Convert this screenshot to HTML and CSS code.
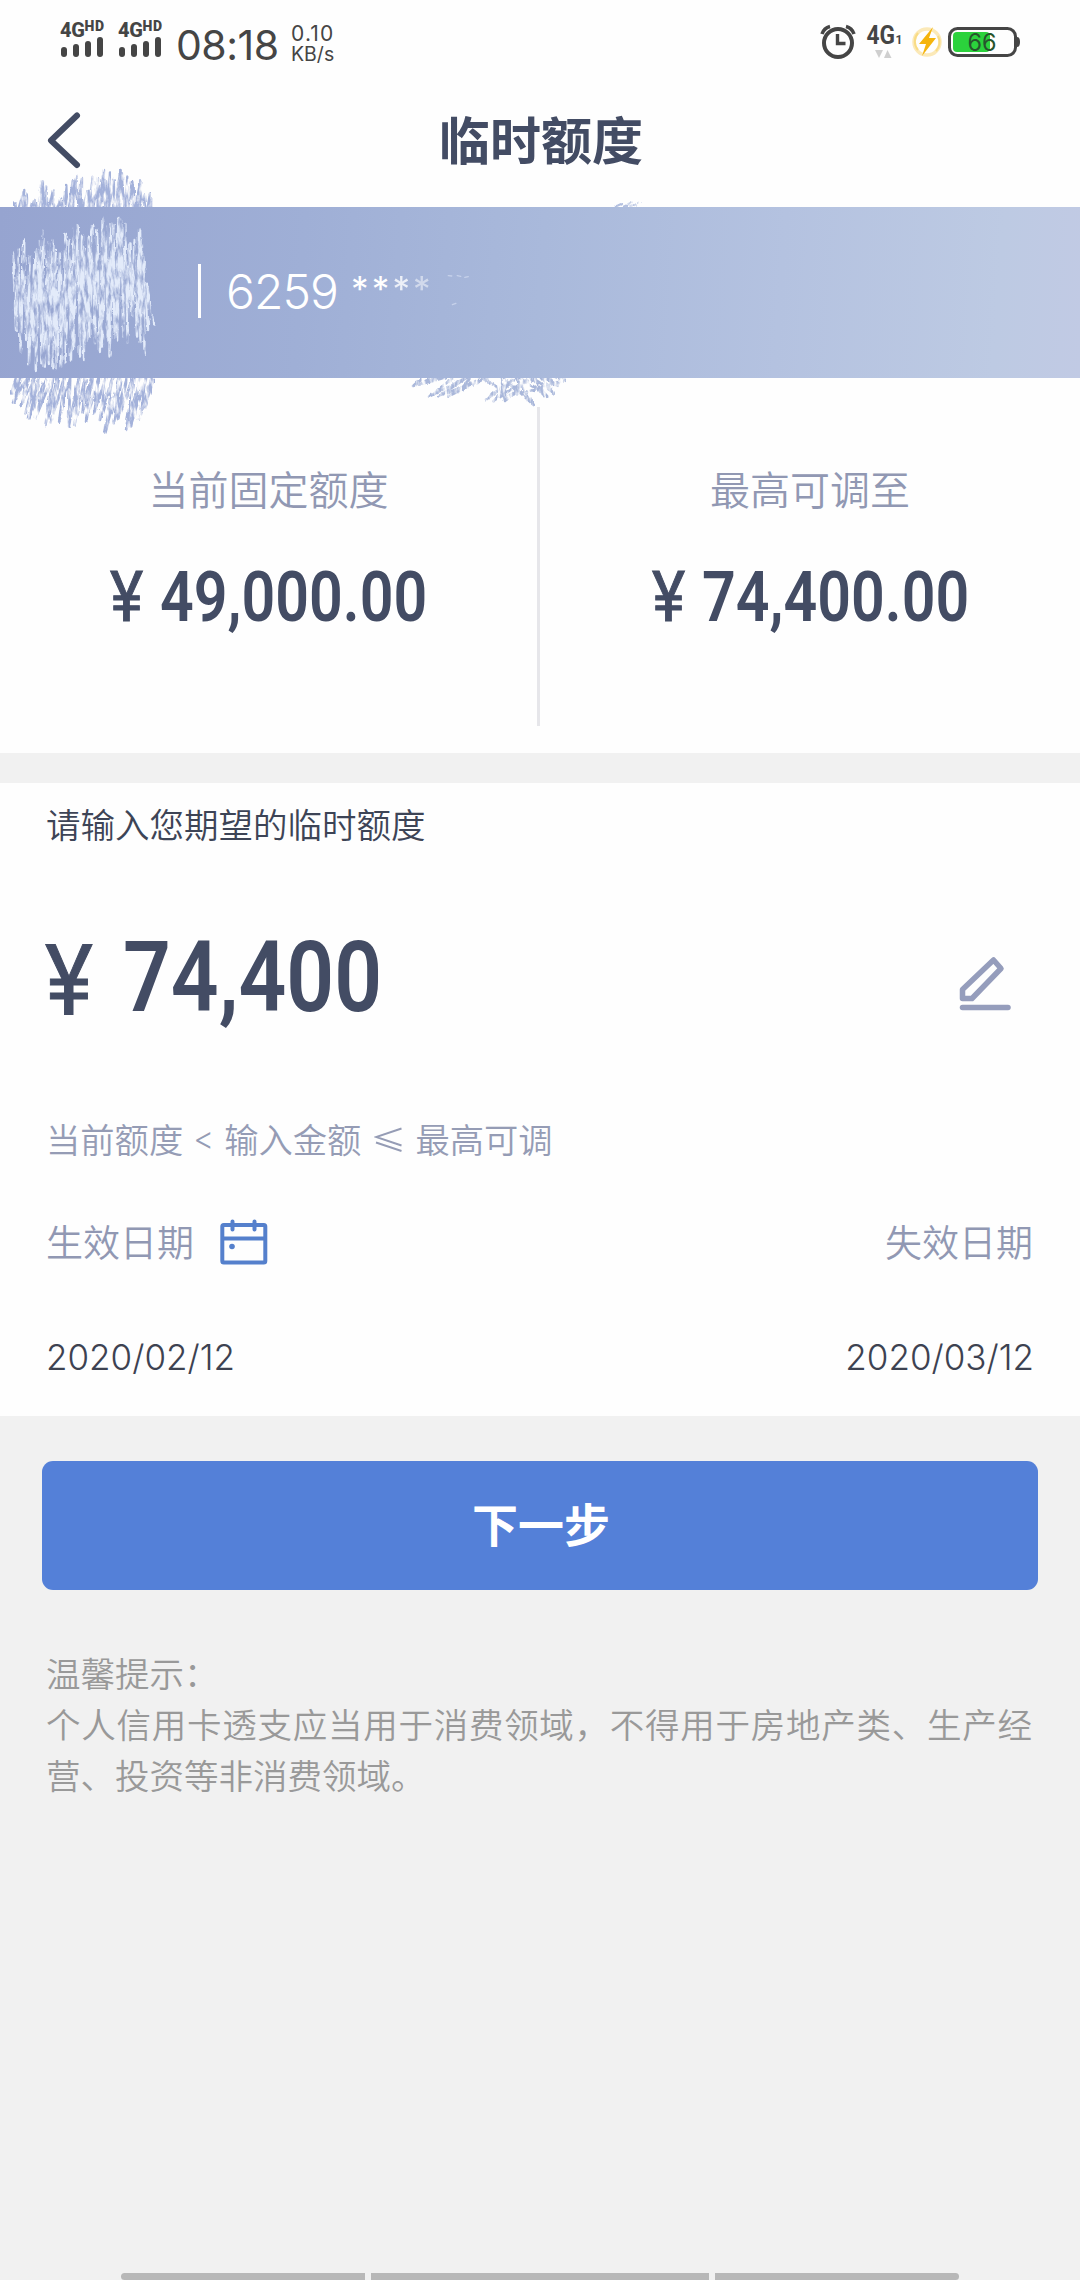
FILE: index.html
```html
<!DOCTYPE html>
<html lang="zh-CN">
<head>
<meta charset="utf-8">
<title>临时额度</title>
<link rel="stylesheet" href="styles.css">
</head>
<body>
<div class="screen">
  <header class="status">
    <div class="status-left">
      <div class="signal">
        <div class="net">4G<span class="hd">HD</span></div>
        <div class="bars"><i class="b1"></i><i class="b2"></i><i class="b3"></i><i class="b4"></i></div>
      </div>
      <div class="signal">
        <div class="net">4G<span class="hd">HD</span></div>
        <div class="bars"><i class="b1"></i><i class="b2"></i><i class="b3"></i><i class="b4"></i></div>
      </div>
      <div class="clock">08:18</div>
      <div class="speed"><span class="rate">0.10</span><span>KB/s</span></div>
    </div>
    <svg class="status-right" width="204" height="40" viewBox="818 22 204 40">
      <g fill="none" stroke="#454545">
        <circle cx="838" cy="43" r="14" stroke-width="4"/>
        <path d="M837.5 34v9.500h8" stroke-width="3.400"/>
        <path d="M822 34q2-6 8-7.500M854 34q-2-6-8-7.500" stroke-width="3.600"/>
      </g>
      <text class="net4g" x="866.500" y="44" textLength="28.500" lengthAdjust="spacingAndGlyphs">4G</text>
      <text class="sub1" x="895.500" y="44">1</text>
      <path d="M875 50h8l-4 8zM884 58h7.500l-4-8z" fill="#cfcfcf"/>
      <circle cx="927" cy="42" r="13" fill="none" stroke="#fbe9b8" stroke-width="3.500"/>
      <path d="M918 33a13 13 0 0 0 0 17M936 51a13 13 0 0 0 2-15" fill="none" stroke="#f9dc85" stroke-width="2"/>
      <path d="M933 27l-14 17h7l-4 12 14-18h-7z" fill="#f5b40c"/>
      <rect x="953" y="32" width="37" height="20" rx="4" fill="#2bd23c"/>
      <rect x="949.500" y="28.500" width="66" height="27" rx="8" fill="none" stroke="#454545" stroke-width="3"/>
      <path d="M1017 37q3 0 3 5t-3 5z" fill="#454545"/>
      <text class="charge" x="967.500" y="51" textLength="29" lengthAdjust="spacingAndGlyphs">66</text>
    </svg>
  </header>

  <nav class="nav">
    <svg class="back" width="40" height="60" viewBox="0 0 40 60"><path d="M33 5.500L7 30.500 33 55" fill="none" stroke="#434c64" stroke-width="6" stroke-linecap="round" stroke-linejoin="round"/></svg>
    <h1 class="title">临时额度</h1>
  </nav>

  <section class="card">
    <div class="card-line"></div>
    <div class="card-no">6259</div>
    <div class="stars"><span>*</span><span>*</span><span class="s3">*</span><span class="s4">*</span></div>
  </section>

  <section class="limits">
    <div class="limit">
      <div class="label">当前固定额度</div>
      <div class="amount"><span class="yen">¥</span><span class="num">49,000.00</span></div>
    </div>
    <div class="divider"></div>
    <div class="limit">
      <div class="label">最高可调至</div>
      <div class="amount"><span class="yen">¥</span><span class="num">74,400.00</span></div>
    </div>
  </section>

  <section class="form">
    <div class="prompt">请输入您期望的临时额度</div>
    <div class="entry">
      <div class="big"><span class="yen">¥</span><span class="num">74,400</span></div>
      <svg class="edit" width="52" height="55" viewBox="959 956 52 55" fill="none" stroke="#959dbc">
        <path d="M962.500 989.500v9h9.500L1001 968.500l-7.500-8.500z" stroke-width="5.500" stroke-linejoin="round"/>
        <path d="M962.500 1007.500h45.500" stroke-width="5.500" stroke-linecap="round"/>
      </svg>
    </div>
    <div class="rule"><span>当前额度</span><span class="lt">&lt;</span><span>输入金额</span><svg class="le" width="29" height="26" viewBox="0 0 29 26" fill="none" stroke="#959cb5" stroke-width="1.900"><path d="M27.500 1.500L2 10l25.500 8.500M2 15.500L27.500 24"/></svg><span>最高可调</span></div>
    <div class="row labels">
      <div class="start"><span>生效日期</span>
        <svg width="48" height="46" viewBox="0 0 48 46" fill="none" stroke="#5580cc" stroke-width="4"><rect x="2.300" y="6" width="43" height="37.500" rx="1.500"/><path d="M2 19.500h44"/><path d="M12.500 2.500v8M34.500 2.500v8" stroke-linecap="round"/><circle cx="12" cy="27.500" r="2.800" fill="#5580cc" stroke="none"/></svg>
      </div>
      <span>失效日期</span>
    </div>
    <div class="row dates"><span>2020/02/12</span><span>2020/03/12</span></div>
  </section>

  <button class="next">下一步</button>

  <section class="tips">
    <p>温馨提示：</p>
    <p>个人信用卡透支应当用于消费领域，不得用于房地产类、生产经营、投资等非消费领域。</p>
  </section>

  <footer class="gesture"><i></i><i class="mid"></i><i></i></footer>

  <svg class="scribble" width="700" height="300" viewBox="0 0 2033 900" preserveAspectRatio="none">
    <defs>
      <filter id="chalk" x="-5%" y="-5%" width="110%" height="110%">
        <feTurbulence type="fractalNoise" baseFrequency="0.09 0.022" numOctaves="4" seed="7" result="n"/>
        <feDisplacementMap in="SourceGraphic" in2="n" scale="12" xChannelSelector="R" yChannelSelector="G" result="d"/>
        <feColorMatrix in="n" type="matrix" values="0 0 0 0 0  0 0 0 0 0  0 0 0 0 0  0 0 3 0 -0.75" result="m"/>
        <feComposite in="d" in2="m" operator="in"/>
      </filter>
      <clipPath id="above"><rect x="0" y="0" width="2033" height="171"/></clipPath>
      <clipPath id="below"><rect x="0" y="684" width="2033" height="216"/></clipPath>
    </defs>
    <g fill="none" stroke-linejoin="round" stroke-linecap="round">
      <path filter="url(#chalk)" stroke="#e3ebfa" stroke-width="7" d="M38 310L46 540 54 295 60 605 70 268 76 570 86 320 84 640 100 330 96 590 106 300 104 660 116 270 120 640 126 242 130 650 140 280 142 645 152 270 152 655 162 300 164 655 174 310 178 650 190 252 190 640 202 270 206 632 214 235 212 600 226 224 232 620 238 260 244 630 246 290 254 570 258 260 262 560 268 228 276 580 282 240 290 606 298 206 296 590 308 230 312 570 320 222 318 620 330 225 332 565 344 206 340 575 352 208 358 560 364 222 370 575 376 280 384 500 390 270 398 560 404 238 408 580 412 270 420 615 416 320 430 540 426 400 446 524"/>
      <g clip-path="url(#above)"><g filter="url(#chalk)" stroke="#a3b1da">
        <path stroke-width="8" d="M44 158L48 200 70 120 64 200 80 130 84 200 100 150 108 200 124 94 124 200 134 110 138 200 154 122 158 200 176 145 180 200 192 105 196 200 212 90 208 200 222 78 226 200 238 84 236 200 254 125 256 200 270 80 266 200 284 85 284 200 302 60 290 200 306 90 306 200 320 68 312 200 330 90 332 200 350 60 342 200 354 70 360 200 370 80 368 200 384 95 388 200 408 95 402 200 416 120 424 200 436 130 438 200"/>
        <path stroke="#b3c0e0" stroke-width="6" d="M1788 168L1808 159M1812 168L1835 157M1830 168L1862 159"/>
      </g></g>
      <g clip-path="url(#below)"><g filter="url(#chalk)" stroke="#a3b1da">
        <path stroke-width="8" d="M50 670L34 730 66 670 38 758 84 670 60 765 104 670 74 790 118 670 84 805 138 670 104 802 156 670 132 825 170 670 148 818 190 670 172 815 204 670 200 830 232 670 216 825 250 670 240 790 268 670 250 815 290 670 274 790 310 670 290 810 330 670 306 848 352 670 330 820 372 670 344 805 390 670 366 840 410 670 378 832 426 670 404 808 444 670 418 775 446 690"/>
        <path stroke="#a9b7da" stroke-width="8" d="M1240 670L1200 708 1290 670 1224 702 1330 672 1246 740 1360 680 1270 742 1390 690 1300 740 1420 680 1340 712 1380 670 1450 715 1410 750 1490 690 1430 754 1530 690 1470 750 1450 670 1550 765 1490 670 1590 740 1530 670 1610 730 1560 670 1616 705 1580 670 1640 690 1550 720 1480 735"/>
      </g></g>
      <path stroke="#c6d1ea" stroke-width="4" d="M1302 377L1312 378M1328 377L1338 379M1350 382L1360 380M1314 464L1324 460"/>
    </g>
  </svg>
</div>
</body>
</html>
```
FILE: styles.css
```css
* { box-sizing: border-box; margin: 0; padding: 0; }
body { background: #f1f1f1; }

.screen {
  position: relative;
  display: flex;
  flex-direction: column;
  width: 1080px;
  height: 2280px;
  overflow: hidden;
  background: #f1f1f1;
  color: #434c64;
  font-family: Inter, "Noto Sans CJK SC", sans-serif;
}

/* status bar */
.status {
  display: flex;
  justify-content: space-between;
  height: 84px;
  padding: 20px 58px 0 60px;
  background: #fefefe;
  color: #454545;
}
.status-left { display: flex; }
.signal { width: 45px; margin-right: 13px; }
.net {
  display: flex;
  height: 17px;
  font: 800 20px/20px Roboto, sans-serif;
  letter-spacing: -0.3px;
}
.hd { font-size: 14px; line-height: 13px; font-weight: 900; letter-spacing: 0.6px; }
.bars { display: flex; align-items: flex-end; gap: 6px; height: 20px; padding-left: 1px; }
.bars i { width: 6px; border-radius: 3px; background: #454545; }
.b1 { height: 10px; }
.b2 { height: 13px; }
.b3 { height: 16px; }
.b4 { height: 20px; }
.clock { width: 115px; font-size: 41px; line-height: 50px; letter-spacing: -0.5px; white-space: nowrap; }
.speed { display: flex; flex-direction: column; padding-top: 4px; font-size: 19.500px; line-height: 20px; }
.rate { font-size: 21px; letter-spacing: 1.2px; }
.status-right { margin-top: 2px; }
.net4g { font: 700 25px Roboto, sans-serif; fill: #454545; }
.sub1 { font: 700 12px Roboto, sans-serif; fill: #454545; }
.charge { font: 400 24px Inter, sans-serif; fill: #27552d; }

/* title bar */
.nav {
  display: grid;
  grid-template-columns: 100px 1fr 100px;
  align-items: center;
  height: 123px;
  padding-bottom: 11px;
  background: #fefefe;
}
.back { margin-left: 44px; }
.title { padding: 4px 0 0 2px; font-size: 51px; font-weight: 700; line-height: 60px; text-align: center; }

/* card band */
.card {
  display: flex;
  height: 171px;
  padding: 57px 0 0 198px;
  background: linear-gradient(94deg, #96a4d0 0%, #9fafd6 28%, #a9b9db 50%, #b4c2e0 72%, #bdcae3 92%, #c1cae4 100%);
  color: #fff;
}
.card-line { width: 3px; height: 54px; background: #fff; }
.card-no { width: 125px; margin-left: 25px; font-size: 48px; font-weight: 300; line-height: 56px; letter-spacing: -0.9px; }
.stars { display: flex; padding-top: 3px; font-size: 35px; font-weight: 400; line-height: 44px; }
.stars span { width: 20.700px; }
.stars .s3 { opacity: 0.8; }
.stars .s4 { opacity: 0.5; }

/* limits */
.limits { display: grid; grid-template-columns: 537px 3px 540px; height: 375px; background: #fefefe; }
.limit { padding-top: 84px; text-align: center; }
.label { font-size: 40px; font-weight: 350; line-height: 58px; color: #9198b3; }
.divider { height: 319px; margin-top: 29px; background: #e6e6ea; }
.amount { display: flex; height: 80px; margin-top: 37px; padding-left: 110px; font: 600 70px/80px Roboto, sans-serif; white-space: nowrap; }
.limit:last-child .amount { padding-left: 112px; }
.amount .yen { width: 50px; font-weight: 400; -webkit-text-stroke: 1px currentColor; transform: scaleX(0.9); transform-origin: left; text-align: left; }
.amount .num, .big .num { transform: scaleX(0.845); transform-origin: left; }

/* form */
.form { height: 633px; margin-top: 30px; padding: 0 47px; background: #fefefe; }
.prompt { margin-left: -1px; padding-top: 18px; font-size: 34.500px; font-weight: 350; line-height: 50px; color: #3d4456; }
.entry { display: flex; justify-content: space-between; height: 120px; margin-top: 67px; }
.big { display: flex; font: 600 98px/120px Roboto, sans-serif; white-space: nowrap; }
.big .yen { width: 78px; margin-left: -2px; padding-top: 3px; font-weight: 400; -webkit-text-stroke: 1px currentColor; transform: scaleX(0.93); transform-origin: left; }
.big .num { transform: scaleX(0.855); }
.edit { margin: 38px 22px 0 0; }
.rule { display: flex; align-items: center; height: 50px; margin: 75px 0 0 -1px; font-size: 34.300px; font-weight: 350; color: #959cb5; }
.lt { width: 19px; margin: 0 12px 0 10px; font-size: 32px; }
.le { margin: 3px 12px 0 13px; }
.row { display: flex; justify-content: space-between; align-items: center; }
.labels { height: 54px; margin: 52px 0 0 -1px; font-size: 37px; font-weight: 350; color: #9198b3; }
.labels span { position: relative; top: -1px; }
.start { display: flex; align-items: center; gap: 26px; }
.dates { height: 50px; margin: 63px -1px 0 -1px; font-size: 35px; font-weight: 300; color: #3d4251; }

.next {
  flex: none;
  height: 129px;
  margin: 45px 42px 0;
  padding: 0 0 6px 2px;
  border: 0;
  border-radius: 11px;
  background: #5480d8;
  color: #fff;
  font: 700 46px/123px "Noto Sans CJK SC", sans-serif;
}

.tips { width: 986px; margin: 59px 0 0 46px; font-size: 34.500px; font-weight: 350; line-height: 51px; color: #999; text-align: justify; }

.gesture { display: flex; gap: 6px; height: 7px; margin: auto 121px 0; }
.gesture i { flex: 0 0 244px; background: #b8b8b8; }
.gesture .mid { flex: 1; }
.gesture i:first-child { border-radius: 4px 0 0 4px; }
.gesture i:last-child { border-radius: 0 4px 4px 0; }

/* hand-drawn strokes over the card band */
.scribble { position: absolute; left: 0; top: 150px; }
```
